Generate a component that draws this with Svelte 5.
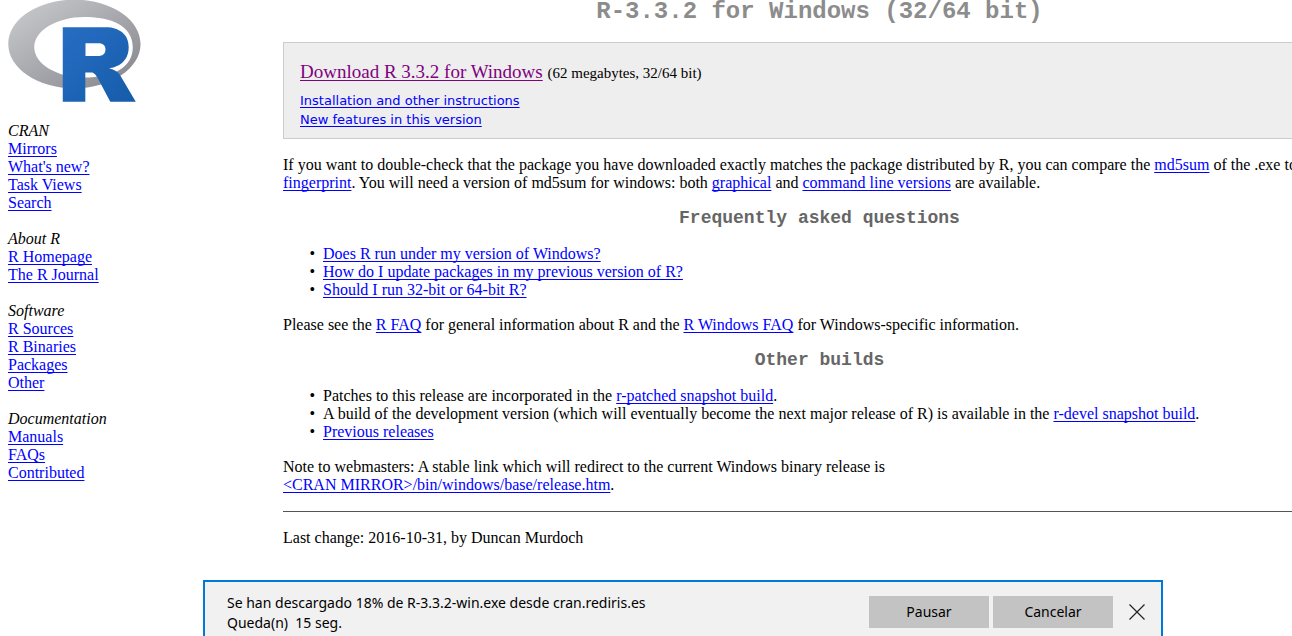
<script>
  const menu = [
    { title: 'CRAN', links: ['Mirrors', "What's new?", 'Task Views', 'Search'] },
    { title: 'About R', links: ['R Homepage', 'The R Journal'] },
    { title: 'Software', links: ['R Sources', 'R Binaries', 'Packages', 'Other'] },
    { title: 'Documentation', links: ['Manuals', 'FAQs', 'Contributed'] }
  ];
  const questions = [
    'Does R run under my version of Windows?',
    'How do I update packages in my previous version of R?',
    'Should I run 32-bit or 64-bit R?'
  ];
</script>

<div class="page">
  <nav class="side">
    <svg class="logo" viewBox="0 5 724 556" role="img" aria-label="R">
      <defs>
        <linearGradient id="ring" x1="0" y1="0" x2="1" y2="1">
          <stop offset="0" stop-color="#cbced0" />
          <stop offset="1" stop-color="#84838b" />
        </linearGradient>
        <linearGradient id="blue" x1="0" y1="0" x2="1" y2="1">
          <stop offset="0" stop-color="#276dc3" />
          <stop offset="1" stop-color="#165caa" />
        </linearGradient>
      </defs>
      <path fill="url(#ring)" fill-rule="evenodd" d="M361.453,485.937C162.329,485.937,0.906,377.828,0.906,244.469C0.906,111.109,162.329,3,361.453,3C560.578,3,722,111.109,722,244.469C722,377.828,560.578,485.937,361.453,485.937ZM416.641,97.406C265.289,97.406,142.594,171.314,142.594,262.484C142.594,353.654,265.289,427.562,416.641,427.562C567.992,427.562,679.687,377.033,679.687,262.484C679.687,147.971,567.992,97.406,416.641,97.406Z" />
      <path fill="url(#blue)" fill-rule="evenodd" d="M550,377C550,377,571.822,383.585,584.5,390C588.899,392.226,596.51,396.668,602,402.5C607.378,408.212,610,414,610,414L696,559L557,559.062L492,437C492,437,478.69,414.131,470.5,407.5C463.668,401.969,460.755,400,454,400C449.298,400,420.974,400,420.974,400L421,558.974L298,559.026L298,152.938L545,152.938C545,152.938,657.5,154.967,657.5,262C657.5,369.033,550,377,550,377ZM496.5,241.024L422.037,240.976L422,310.026L496.5,310.002C496.5,310.002,531,309.895,531,274.877C531,239.155,496.5,241.024,496.5,241.024Z" />
    </svg>
    {#each menu as group}
      <section>
        <em>{group.title}</em>
        {#each group.links as link}
          <a href="#top">{link}</a>
        {/each}
      </section>
    {/each}
  </nav>

  <main>
    <h1>R-3.3.2 for Windows (32/64 bit)</h1>

    <div class="box">
      <p class="download"><a class="visited" href="#top">Download R 3.3.2 for Windows</a> <small>(62 megabytes, 32/64 bit)</small></p>
      <p class="sub"><a href="#top">Installation and other instructions</a></p>
      <p class="sub"><a href="#top">New features in this version</a></p>
    </div>

    <p>If you want to double-check that the package you have downloaded exactly matches the package distributed by R, you can compare the <a href="#top">md5sum</a> of the .exe to<br /><a href="#top">fingerprint</a>. You will need a version of md5sum for windows: both <a href="#top">graphical</a> and <a href="#top">command line versions</a> are available.</p>

    <h2>Frequently asked questions</h2>
    <ul>
      {#each questions as question}
        <li><a href="#top">{question}</a></li>
      {/each}
    </ul>
    <p>Please see the <a href="#top">R FAQ</a> for general information about R and the <a href="#top">R Windows FAQ</a> for Windows-specific information.</p>

    <h2>Other builds</h2>
    <ul>
      <li>Patches to this release are incorporated in the <a href="#top">r-patched snapshot build</a>.</li>
      <li>A build of the development version (which will eventually become the next major release of R) is available in the <a href="#top">r-devel snapshot build</a>.</li>
      <li><a href="#top">Previous releases</a></li>
    </ul>
    <p>Note to webmasters: A stable link which will redirect to the current Windows binary release is<br /><a href="#top">&lt;CRAN MIRROR&gt;/bin/windows/base/release.htm</a>.</p>
    <hr />
    <p>Last change: 2016-10-31, by Duncan Murdoch</p>
  </main>
</div>

<aside class="bar">
  <p>Se han descargado 18% de R-3.3.2-win.exe desde cran.rediris.es<br />Queda(n)&nbsp; 15 seg.</p>
  <button type="button">Pausar</button>
  <button type="button">Cancelar</button>
  <button type="button" class="close" aria-label="Cerrar">
    <svg viewBox="0 0 16 16"><path d="M.5.5l15 15M15.5.5l-15 15" stroke="#222" stroke-width="1.2" /></svg>
  </button>
</aside>

<style>
  :global(body) {
    overflow: hidden;
    background: #fff;
  }
  .page {
    display: grid;
    grid-template-columns: 275px 1fr;
    padding-left: 8px;
    margin-right: -64px;
    font: 16px/18px 'Liberation Serif', 'Times New Roman', serif;
    color: #000;
  }
  a {
    color: #00f;
    text-underline-offset: 2px;
    text-decoration-thickness: 1px;
    text-decoration-skip-ink: none;
  }
  .visited {
    color: #800080;
  }
  .side {
    display: flex;
    flex-direction: column;
    align-items: flex-start;
    gap: 18px;
  }
  .logo {
    width: 133px;
    height: 102px;
    margin-bottom: 2px;
  }
  .side section {
    display: flex;
    flex-direction: column;
    align-items: flex-start;
  }
  h1,
  h2 {
    margin: 0;
    font-family: 'Liberation Mono', 'Courier New', monospace;
    text-align: center;
  }
  h1 {
    padding-bottom: 18px;
    font-size: 24px;
    line-height: 24px;
    color: #8c8c8c;
  }
  h2 {
    font-size: 18px;
    line-height: 18px;
    color: #666;
  }
  p {
    margin: 17px 0;
  }
  .box {
    padding: 19px 16px 9px;
    border: 1px solid #ccc;
    background: #eee;
  }
  .box p {
    margin: 0;
  }
  .download {
    font-size: 19px;
    line-height: 20px;
  }
  .download small {
    font-size: 15px;
  }
  .box .sub {
    font: 13px/19px 'DejaVu Sans', Verdana, sans-serif;
  }
  .download + .sub {
    padding-top: 8px;
  }
  ul {
    margin: 18px 0 17px;
    padding-left: 40px;
    list-style-type: '•\a0\a0';
  }
  hr {
    margin: 16px 0;
    border: 0;
    border-top: 1px solid #555;
  }
  .bar {
    position: fixed;
    bottom: 0;
    left: 203px;
    right: 129px;
    display: flex;
    align-items: flex-start;
    gap: 4px;
    padding: 14px 16px 3px 22px;
    border: 2px solid #0078d7;
    border-bottom: 0;
    background: #f1f1f1;
    box-sizing: border-box;
    font: 14px/20px 'Noto Sans', 'Segoe UI', sans-serif;
  }
  .bar p {
    flex: 1;
    margin: -3px 0 0;
  }
  button {
    width: 120px;
    height: 32px;
    padding: 0;
    border: 0;
    background: #c3c3c3;
    font: inherit;
    color: #000;
  }
  .bar .close {
    display: grid;
    place-items: center;
    width: 16px;
    margin-left: 12px;
    background: none;
  }
  .close svg {
    width: 16px;
    height: 16px;
  }
</style>
